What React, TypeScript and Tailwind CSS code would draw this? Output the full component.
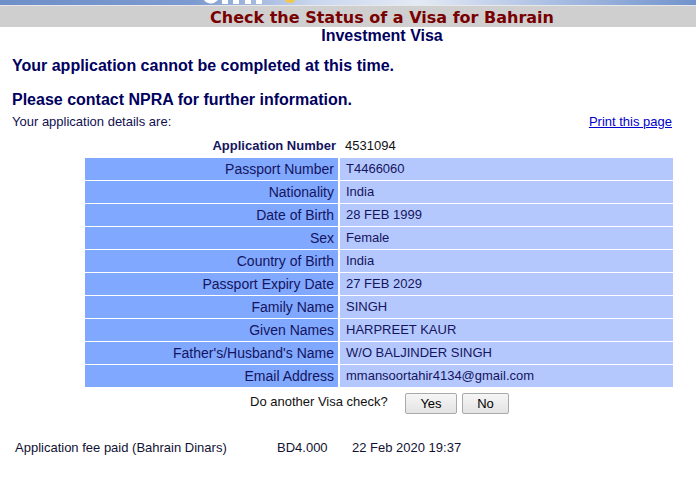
import React from "react";

const rows: [string, string][] = [
  ["Passport Number", "T4466060"],
  ["Nationality", "India"],
  ["Date of Birth", "28 FEB 1999"],
  ["Sex", "Female"],
  ["Country of Birth", "India"],
  ["Passport Expiry Date", "27 FEB 2029"],
  ["Family Name", "SINGH"],
  ["Given Names", "HARPREET KAUR"],
  ["Father's/Husband's Name", "W/O BALJINDER SINGH"],
  ["Email Address", "mmansoortahir4134@gmail.com"],
];

export default function App() {
  return (
    <div className="w-[696px] h-[482px] bg-white overflow-hidden" style={{ fontFamily: '"Liberation Sans", Arial, sans-serif' }}>
      {/* top banner strip with the bottom of the logo */}
      <div className="relative h-[5px] overflow-hidden bg-[linear-gradient(90deg,#6f8fc8_0%,#7d9bd0_28%,#c9d6ee_45%,#e4eaf5_60%,#a9bde2_80%,#7193cc_100%)]">
        <svg className="absolute left-[200px] top-0" width="100" height="5" viewBox="0 0 100 5">
          <path d="M4 0 C6 3 10 4 14 3 L18 0 Z" fill="#ffffff" />
          <rect x="22" y="0" width="6" height="4" fill="#ffffff" />
          <rect x="33" y="0" width="6" height="4" fill="#ffffff" />
          <rect x="45" y="0" width="6" height="4" fill="#ffffff" />
          <rect x="56" y="0" width="6" height="4" fill="#ffffff" />
          <ellipse cx="90" cy="0" rx="5" ry="3" fill="#f2c84a" />
        </svg>
      </div>
      <div className="h-px bg-[#e8e8e8]" />
      <div className="h-[21px] bg-[#cfcfcf] pl-[68px] text-center">
        <span className="text-[16px] font-bold leading-[21px] text-[#780000]" style={{ fontFamily: '"DejaVu Sans", Verdana, sans-serif' }}>
          Check the Status of a Visa for Bahrain
        </span>
      </div>
      <div className="pl-[68px] text-center text-[16px] font-bold leading-[18px] text-[#00005e]">Investment Visa</div>

      <div className="pl-[12px] mt-[12px] text-[16px] font-bold leading-[18px] text-[#00005e]">Your application cannot be completed at this time.</div>
      <div className="pl-[12px] mt-[16px] text-[16px] font-bold leading-[18px] text-[#00005e]">Please contact NPRA for further information.</div>

      <div className="flex justify-between pl-[12px] pr-[24px] mt-[6px] text-[13px] leading-[14px]">
        <span className="text-[#101050]">Your application details are:</span>
        <a className="text-[#0000cc] underline">Print this page</a>
      </div>

      <div className="ml-[85px] w-[588px] mt-[6px] grid grid-cols-[253px_333px] gap-x-[2px] gap-y-px leading-[22px] text-[#141460]">
        <div className="h-[22px] text-right pr-[2px] font-bold text-[13px]">Application Number</div>
        <div className="h-[22px] pl-[5px] text-[13px] text-[#111]">4531094</div>
        {rows.map(([k, v]) => (
          <React.Fragment key={k}>
            <div className="h-[22px] bg-[#80a8ff] text-right pr-[4px] text-[14px]">{k}</div>
            <div className="h-[22px] bg-[#b5c8fd] pl-[6px] text-[13px]">{v}</div>
          </React.Fragment>
        ))}
      </div>

      <div className="flex items-start ml-[250px] mt-[6px] text-[13px] text-[#111]">
        <span className="w-[155px] leading-[16px] pt-[1px]">Do another Visa check?</span>
        <button className="w-[52px] h-[21px] border border-[#a9a9a9] rounded-[2px] bg-[linear-gradient(#f6f6f6,#e3e3e3)] text-[13px] leading-[19px] text-black">Yes</button>
        <button className="ml-[5px] w-[47px] h-[21px] border border-[#a9a9a9] rounded-[2px] bg-[linear-gradient(#f6f6f6,#e3e3e3)] text-[13px] leading-[19px] text-black">No</button>
      </div>

      <div className="flex ml-[15px] mt-[27px] text-[13px] leading-[14px] text-[#111133]">
        <span className="w-[262px]">Application fee paid (Bahrain Dinars)</span>
        <span className="w-[75px]">BD4.000</span>
        <span>22 Feb 2020 19:37</span>
      </div>
    </div>
  );
}
